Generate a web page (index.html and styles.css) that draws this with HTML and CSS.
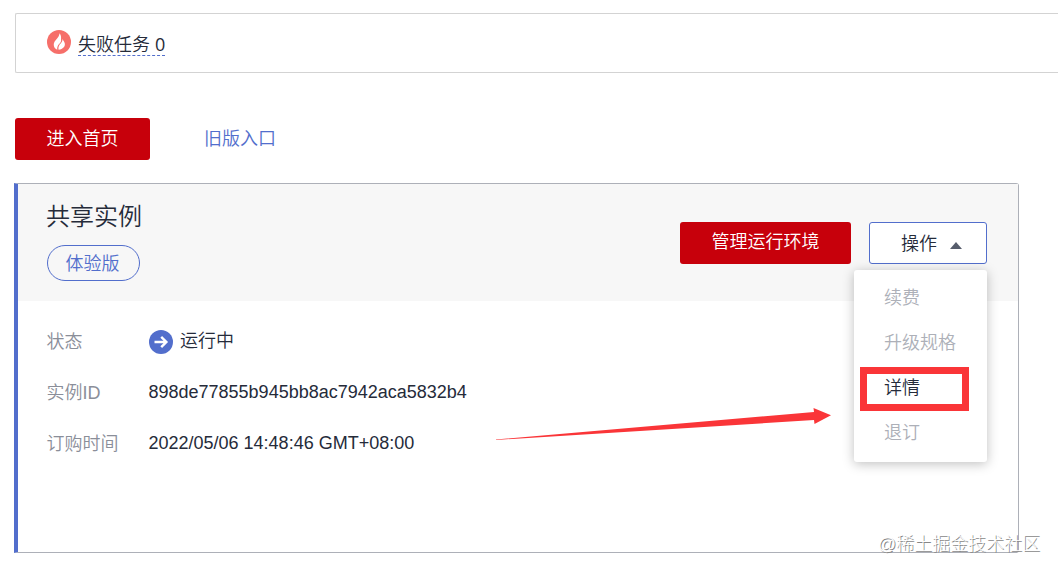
FILE: index.html
```html
<!DOCTYPE html>
<html lang="zh-CN">
<head>
    <meta charset="UTF-8">
    <title>共享实例</title>
    <link rel="stylesheet" href="styles.css">
</head>
<body>
    <div class="container">
        <div class="task-bar">
            <svg class="fire-icon" viewBox="0 0 24 24">
                <circle cx="12" cy="12" r="12" fill="#f66f6a"/>
                <path d="M12.4 3.2C12.8 6 9.5 8.8 7.8 11.3C5.9 14.3 6.6 18.2 10.3 19.7C9.8 16.2 11.7 14.4 13.2 12.7C14.1 11.4 14.2 10.5 14 9.4C14.3 7 14 4.8 12.4 3.2Z" fill="#fff"/>
                <path d="M15.3 8.7C16 11.8 13.7 13 12.4 15C11.5 16.5 11.2 18 11.6 19.7C16 19.4 18.3 16.7 17.8 13.6C17.5 11.5 16.1 10.5 15.3 8.7Z" fill="#fff"/>
            </svg>
            <a class="task-link">失败任务 <span class="count">0</span></a>
        </div>

        <div class="entry-row">
            <button class="btn btn-primary btn-home">进入首页</button>
            <a class="old-link">旧版入口</a>
        </div>

        <div class="card">
            <div class="card-header">
                <div class="card-title">
                    <h2>共享实例</h2>
                    <span class="tag">体验版</span>
                </div>
                <div class="card-actions">
                    <button class="btn btn-primary btn-manage">管理运行环境</button>
                    <div class="dropdown">
                        <button class="btn btn-more">操作<span class="caret"></span></button>
                        <div class="menu">
                            <div class="menu-item disabled">续费</div>
                            <div class="menu-item disabled">升级规格</div>
                            <div class="menu-item">详情<span class="highlight"></span></div>
                            <div class="menu-item disabled">退订</div>
                        </div>
                    </div>
                </div>
            </div>
            <div class="card-body">
                <div class="row">
                    <span class="label">状态</span>
                    <span class="value">
                        <svg class="run-icon" viewBox="0 0 24 24">
                            <circle cx="12" cy="12" r="12" fill="#526ecc"/>
                            <path d="M5.5 12H17M12.2 6.8L17.4 12L12.2 17.2" fill="none" stroke="#fff" stroke-width="2.4"/>
                        </svg>
                        <span class="status-text">运行中</span>
                    </span>
                </div>
                <div class="row">
                    <span class="label">实例ID</span>
                    <span class="value">898de77855b945bb8ac7942aca5832b4</span>
                </div>
                <div class="row">
                    <span class="label">订购时间</span>
                    <span class="value">2022/05/06 14:48:46 GMT+08:00</span>
                </div>
            </div>
        </div>
    </div>

    <svg class="arrow" viewBox="0 0 336 18">
        <path d="M0 31.5L318 4L317.5 0L335 7.3L318.5 16L318 12L0 32Z" fill="#fa3538"/>
    </svg>
    <div class="watermark">@稀土掘金技术社区</div>
</body>
</html>
```

FILE: styles.css
```css
* {
    box-sizing: border-box;
}
body {
    margin: 0;
    height: 572px;
    position: relative;
    overflow: hidden;
    background-color: #fff;
    color: #252b3a;
    font-family: "Liberation Sans", "Noto Sans CJK SC", sans-serif;
    font-size: 18px;
    font-weight: 350;
}
.container {
    padding: 13px 0 0 14px;
}
.task-bar {
    display: flex;
    align-items: center;
    height: 60px;
    margin-left: 1px;
    padding-left: 31px;
    border: 1px solid #d3d3d3;
    border-right: none;
    border-radius: 2px 0 0 2px;
}
.fire-icon {
    width: 24px;
    height: 24px;
    margin: 0 7px 3px 0;
}
.task-link {
    margin-top: 3px;
    line-height: 20px;
    border-bottom: 1px dashed #526ecc;
}
.count {
    font-family: "Open Sans", sans-serif;
    font-weight: 400;
}
.entry-row {
    display: flex;
    align-items: center;
    margin: 45px 0 23px 1px;
}
.btn {
    height: 42px;
    padding: 0;
    border: none;
    border-radius: 3px;
    font: inherit;
    cursor: pointer;
}
.btn-primary {
    padding-bottom: 4px;
    background-color: #c7000b;
    color: #fff;
}
.btn-home {
    width: 135px;
}
.old-link {
    margin: 0 0 4px 54px;
    color: #526ecc;
}
.card {
    width: 1005px;
    height: 370px;
    border: 1px solid #adb0b8;
    border-left: 4px solid #526ecc;
    border-radius: 0 3px 3px 0;
}
.card-header {
    display: flex;
    justify-content: space-between;
    height: 117px;
    padding: 15px 31px 0 28px;
    background-color: #f7f7f7;
}
.card-title h2 {
    margin: 0 0 10px;
    font-size: 24px;
    font-weight: 350;
    line-height: 36px;
}
.tag {
    display: block;
    width: 93px;
    height: 36px;
    margin-left: 1px;
    padding-right: 2px;
    border: 1px solid #526ecc;
    border-radius: 18px;
    color: #526ecc;
    line-height: 36px;
    text-align: center;
}
.card-actions {
    display: flex;
    gap: 18px;
    padding-top: 23px;
}
.btn-manage {
    width: 171px;
    padding-bottom: 6px;
}
.dropdown {
    position: relative;
}
.btn-more {
    display: flex;
    align-items: center;
    width: 118px;
    padding: 0 0 2px 31px;
    border: 1px solid #526ecc;
    background-color: #fff;
    color: #252b3a;
}
.caret {
    margin: 6px 0 0 13px;
    border: 6px solid transparent;
    border-top: none;
    border-bottom: 7px solid #575d6c;
}
.menu {
    position: absolute;
    top: 48px;
    right: 0;
    width: 133px;
    height: 192px;
    padding-top: 5px;
    border-radius: 3px;
    background-color: #fff;
    box-shadow: 0 2px 12px rgba(0, 0, 0, 0.25);
}
.menu-item {
    position: relative;
    height: 45px;
    padding-left: 30px;
    line-height: 46px;
}
.menu-item.disabled {
    color: #adb0b8;
}
/* red frame around the entry to click */
.highlight {
    position: absolute;
    top: 2px;
    left: 6px;
    width: 109px;
    height: 44px;
    border: 7px solid #fa3538;
}
.card-body {
    padding: 15px 0 0 28.5px;
}
.row {
    display: flex;
    align-items: center;
    height: 51px;
}
.label {
    width: 102px;
    padding-bottom: 4px;
    color: #8a8e99;
}
.value {
    display: flex;
    align-items: center;
}
.run-icon {
    width: 24px;
    height: 24px;
    margin: 0 7px 0 0.5px;
}
.status-text {
    padding-bottom: 5px;
}
.arrow {
    position: absolute;
    top: 408px;
    left: 496px;
    width: 336px;
    height: 18px;
    overflow: visible;
}
.watermark {
    position: absolute;
    top: 531px;
    right: 18px;
    color: #fff;
    font-weight: 300;
    line-height: 26px;
    text-shadow: 1px 1px 0 #888;
}
```
